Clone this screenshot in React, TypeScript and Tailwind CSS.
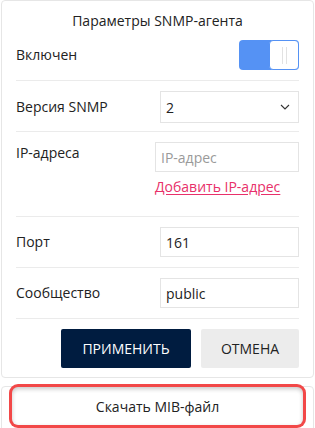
import React from 'react';

const font = { fontFamily: '"Open Sans", "Noto Sans", sans-serif' };

const Row = ({ children, className = '' }: { children: React.ReactNode; className?: string }) => (
  <div className={`flex border-b border-[#ebebeb] ${className}`}>{children}</div>
);

export default function App() {
  return (
    <div className="w-[315px] h-[428px] overflow-hidden bg-white px-[1px] text-[14px] text-[#222]" style={font}>
      <div className="w-[313px] rounded-[4px] border border-[#e6e6e6] px-[14px]">
        <h1 className="pt-[10px] text-center text-[14px] leading-[20px] text-[#222]">Параметры SNMP-агента</h1>

        <Row className="items-center pt-[9px] pb-[10px]">
          <span className="flex-1 leading-[20px]">Включен</span>
          <div className="flex h-[30px] w-[60px] overflow-hidden rounded-[4px] bg-[#5592f4]">
            <div className="w-[30px]" />
            <div className="flex w-[30px] items-center justify-center gap-[3px] rounded-[4px] border border-[#5592f4] bg-white">
              <span className="h-[17px] w-[1px] bg-[#e2e2e2]" />
              <span className="h-[17px] w-[1px] bg-[#e2e2e2]" />
            </div>
          </div>
        </Row>

        <Row className="items-center pt-[10px] pb-[8px]">
          <span className="w-[144px] leading-[20px]">Версия SNMP</span>
          <div className="flex h-[32px] flex-1 items-center justify-between border border-[#e4e4e4] pl-[5px] pr-[8px]">
            <span>2</span>
            <svg width="10" height="6" viewBox="0 0 10 6" fill="none">
              <path d="M1 1l4 4 4-4" stroke="#333" strokeWidth="1.1" />
            </svg>
          </div>
        </Row>

        <Row className="items-start pt-[10px] pb-[19px]">
          <span className="w-[139px] leading-[20px] pt-[1px]">IP-адреса</span>
          <div className="flex flex-1 flex-col">
            <div className="flex h-[30px] items-center border border-[#e4e4e4] pl-[5px] text-[#9a9a9a]">IP-адрес</div>
            <a className="mt-[5px] leading-[20px] text-[#e8306a] underline underline-offset-[2px]">Добавить IP-адрес</a>
          </div>
        </Row>

        <Row className="items-center py-[10px]">
          <span className="w-[144px] leading-[20px]">Порт</span>
          <div className="flex h-[30px] flex-1 items-center border border-[#e4e4e4] pl-[5px]">161</div>
        </Row>

        <Row className="items-center py-[10px]">
          <span className="w-[144px] leading-[20px]">Сообщество</span>
          <div className="flex h-[30px] flex-1 items-center border border-[#e4e4e4] pl-[5px]">public</div>
        </Row>

        <div className="flex justify-end gap-[10px] pt-[10px] pb-[9px]">
          <button className="h-[39px] w-[130px] rounded-[2px] bg-[#001c40] text-white">ПРИМЕНИТЬ</button>
          <button className="h-[39px] w-[98px] rounded-[2px] bg-[#ececec] text-[#222]">ОТМЕНА</button>
        </div>
      </div>

      <div className="mt-[8px] h-[60px] w-[313px] rounded-[4px] border border-[#e6e6e6] px-[10px]">
        <button className="h-[38px] w-full rounded-[6px] bg-white text-[#222] ring-[3px] ring-[#f24848] shadow-[inset_0_2px_4px_rgba(0,0,0,0.22)]">
          Скачать MIB-файл
        </button>
      </div>
    </div>
  );
}
